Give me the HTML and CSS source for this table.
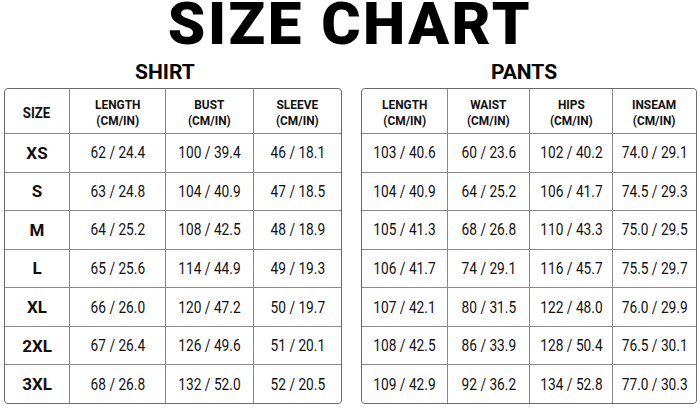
FILE: index.html
```html
<!DOCTYPE html>
<html>
<head>
<meta charset="utf-8">
<link rel="stylesheet" href="styles.css">
</head>
<body>
<div class="page">
  <h1 class="title">SIZE CHART</h1>
  <div class="charts">
    <section class="chart chart-shirt">
      <h2 class="subtitle">SHIRT</h2>
      <div class="grid grid-shirt">
        <div class="cell head size-head"><span class="t">SIZE</span></div>
        <div class="cell head"><span class="t">LENGTH<br>(CM/IN)</span></div>
        <div class="cell head"><span class="t">BUST<br>(CM/IN)</span></div>
        <div class="cell head"><span class="t">SLEEVE<br>(CM/IN)</span></div>

        <div class="cell size"><span class="t">XS</span></div><div class="cell"><span class="t">62 / 24.4</span></div><div class="cell"><span class="t">100 / 39.4</span></div><div class="cell"><span class="t">46 / 18.1</span></div>
        <div class="cell size"><span class="t">S</span></div><div class="cell"><span class="t">63 / 24.8</span></div><div class="cell"><span class="t">104 / 40.9</span></div><div class="cell"><span class="t">47 / 18.5</span></div>
        <div class="cell size"><span class="t">M</span></div><div class="cell"><span class="t">64 / 25.2</span></div><div class="cell"><span class="t">108 / 42.5</span></div><div class="cell"><span class="t">48 / 18.9</span></div>
        <div class="cell size"><span class="t">L</span></div><div class="cell"><span class="t">65 / 25.6</span></div><div class="cell"><span class="t">114 / 44.9</span></div><div class="cell"><span class="t">49 / 19.3</span></div>
        <div class="cell size"><span class="t">XL</span></div><div class="cell"><span class="t">66 / 26.0</span></div><div class="cell"><span class="t">120 / 47.2</span></div><div class="cell"><span class="t">50 / 19.7</span></div>
        <div class="cell size"><span class="t">2XL</span></div><div class="cell"><span class="t">67 / 26.4</span></div><div class="cell"><span class="t">126 / 49.6</span></div><div class="cell"><span class="t">51 / 20.1</span></div>
        <div class="cell size"><span class="t">3XL</span></div><div class="cell"><span class="t">68 / 26.8</span></div><div class="cell"><span class="t">132 / 52.0</span></div><div class="cell"><span class="t">52 / 20.5</span></div>
      </div>
    </section>
    <section class="chart chart-pants">
      <h2 class="subtitle">PANTS</h2>
      <div class="grid grid-pants">
        <div class="cell head"><span class="t">LENGTH<br>(CM/IN)</span></div>
        <div class="cell head"><span class="t">WAIST<br>(CM/IN)</span></div>
        <div class="cell head"><span class="t">HIPS<br>(CM/IN)</span></div>
        <div class="cell head"><span class="t">INSEAM<br>(CM/IN)</span></div>

        <div class="cell"><span class="t">103 / 40.6</span></div><div class="cell"><span class="t">60 / 23.6</span></div><div class="cell"><span class="t">102 / 40.2</span></div><div class="cell"><span class="t">74.0 / 29.1</span></div>
        <div class="cell"><span class="t">104 / 40.9</span></div><div class="cell"><span class="t">64 / 25.2</span></div><div class="cell"><span class="t">106 / 41.7</span></div><div class="cell"><span class="t">74.5 / 29.3</span></div>
        <div class="cell"><span class="t">105 / 41.3</span></div><div class="cell"><span class="t">68 / 26.8</span></div><div class="cell"><span class="t">110 / 43.3</span></div><div class="cell"><span class="t">75.0 / 29.5</span></div>
        <div class="cell"><span class="t">106 / 41.7</span></div><div class="cell"><span class="t">74 / 29.1</span></div><div class="cell"><span class="t">116 / 45.7</span></div><div class="cell"><span class="t">75.5 / 29.7</span></div>
        <div class="cell"><span class="t">107 / 42.1</span></div><div class="cell"><span class="t">80 / 31.5</span></div><div class="cell"><span class="t">122 / 48.0</span></div><div class="cell"><span class="t">76.0 / 29.9</span></div>
        <div class="cell"><span class="t">108 / 42.5</span></div><div class="cell"><span class="t">86 / 33.9</span></div><div class="cell"><span class="t">128 / 50.4</span></div><div class="cell"><span class="t">76.5 / 30.1</span></div>
        <div class="cell"><span class="t">109 / 42.9</span></div><div class="cell"><span class="t">92 / 36.2</span></div><div class="cell"><span class="t">134 / 52.8</span></div><div class="cell"><span class="t">77.0 / 30.3</span></div>
      </div>
    </section>
  </div>
</div>
</body>
</html>
```
FILE: styles.css
```css
* { box-sizing: border-box; }
html, body { margin: 0; padding: 0; background: #fff; }
body { color: #111; font-family: Roboto, "Liberation Sans", sans-serif; }
.page { width: 700px; height: 408px; padding: 0 4px; }
.title {
  margin: 0;
  height: 48px;
  padding-top: 1px;
  font-family: Roboto, "Liberation Sans", sans-serif;
  font-weight: 900;
  font-size: 60px;
  line-height: 46px;
  letter-spacing: 2.5px;
  text-align: center;
  color: #000;
}
.charts {
  display: grid;
  grid-template-columns: 338px 336px;
  column-gap: 19px;
}
.subtitle {
  margin: 0;
  padding-top: 9px;
  height: 40px;
  font-family: Roboto, "Liberation Sans", sans-serif;
  font-weight: 700;
  font-size: 21px;
  line-height: 31px;
  text-align: center;
  color: #000;
}
.chart-shirt .subtitle { padding-right: 16px; }
.chart-pants .subtitle { padding-right: 10px; }
.grid {
  display: grid;
  height: 316px;
  grid-template-rows: 44px repeat(7, 1fr);
  gap: 1px;
  background: #8a8a8a;
  border: 1px solid #6a6a6a;
  border-radius: 4px;
  overflow: hidden;
}
.grid-shirt { grid-template-columns: 64px 95px 87px 87px; }
.grid-pants { grid-template-columns: 85px 81px 82px 83px; }
.cell {
  background: #fff;
  display: flex;
  align-items: center;
  justify-content: center;
  text-align: center;
  font-size: 16.5px;
}
.t {
  display: inline-block;
  white-space: nowrap;
  transform: scaleX(0.83);
}
.head {
  font-weight: 700;
  font-size: 13.5px;
  line-height: 16px;
  padding-top: 1px;
}
.head .t { transform: scaleX(0.88); }
.size-head { font-size: 15px; padding-top: 3px; }
.size { font-weight: 700; font-size: 17px; }
.size .t { transform: none; }
```
